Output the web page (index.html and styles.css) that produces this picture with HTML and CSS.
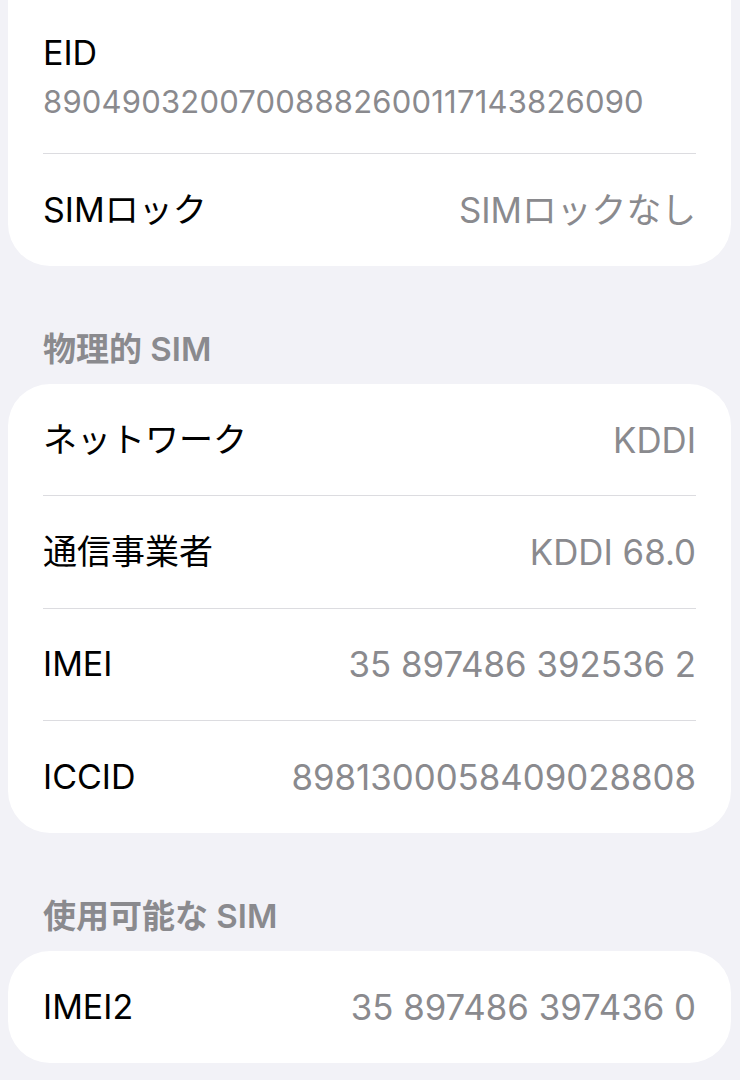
FILE: index.html
```html
<!DOCTYPE html>
<html lang="ja">
<head>
<meta charset="utf-8">
<link rel="stylesheet" href="styles.css">
</head>
<body>
<main class="page">
  <section class="card card-continued">
    <div class="row row-stacked">
      <div class="label">EID</div>
      <div class="subvalue">89049032007008882600117143826090</div>
    </div>
    <div class="row">
      <div class="label">SIMロック</div>
      <div class="value">SIMロックなし</div>
    </div>
  </section>

  <h2 class="section-header">物理的 SIM</h2>
  <section class="card">
    <div class="row">
      <div class="label">ネットワーク</div>
      <div class="value">KDDI</div>
    </div>
    <div class="row">
      <div class="label">通信事業者</div>
      <div class="value">KDDI 68.0</div>
    </div>
    <div class="row">
      <div class="label">IMEI</div>
      <div class="value">35 897486 392536 2</div>
    </div>
    <div class="row">
      <div class="label">ICCID</div>
      <div class="value">8981300058409028808</div>
    </div>
  </section>

  <h2 class="section-header">使用可能な SIM</h2>
  <section class="card">
    <div class="row">
      <div class="label">IMEI2</div>
      <div class="value">35 897486 397436 0</div>
    </div>
  </section>
</main>
</body>
</html>
```

FILE: styles.css
```css
* { box-sizing: border-box; }

html, body {
  margin: 0;
  padding: 0;
  background: #f2f2f7;
}

body {
  font-family: "Inter", "Noto Sans CJK JP", sans-serif;
  color: #000;
  overflow: hidden;
}

.page {
  display: flex;
  flex-direction: column;
  padding: 0 9px 0 8px;
}

.card {
  background: #fff;
  border-radius: 42px;
  display: flex;
  flex-direction: column;
}

.card-continued {
  border-top-left-radius: 0;
  border-top-right-radius: 0;
}

.row {
  height: 111px;
  display: flex;
  align-items: center;
  justify-content: space-between;
  margin: 0 35px 0 35px;
  gap: 20px;
}

.row:only-child {
  height: 112px;
}

.row + .row {
  border-top: 1.5px solid #dcdce0;
  height: 112.5px;
}

.card-continued .row + .row {
  height: 113px;
}

.row-stacked {
  height: 153px;
  flex-direction: column;
  align-items: flex-start;
  justify-content: flex-start;
  padding-top: 31px;
  gap: 7px;
}

.label {
  font-size: 34px;
  line-height: 44px;
  white-space: nowrap;
}

.value {
  font-size: 34.8px;
  line-height: 44px;
  color: #8a8a8e;
  white-space: nowrap;
}

.subvalue {
  font-size: 31px;
  line-height: 40px;
  letter-spacing: 0.2px;
  color: #8a8a8e;
  white-space: nowrap;
}

.section-header {
  margin: 0;
  padding: 63px 35px 15px;
  font-size: 33px;
  line-height: 40px;
  font-weight: 600;
  color: #8a8a8e;
}
```
